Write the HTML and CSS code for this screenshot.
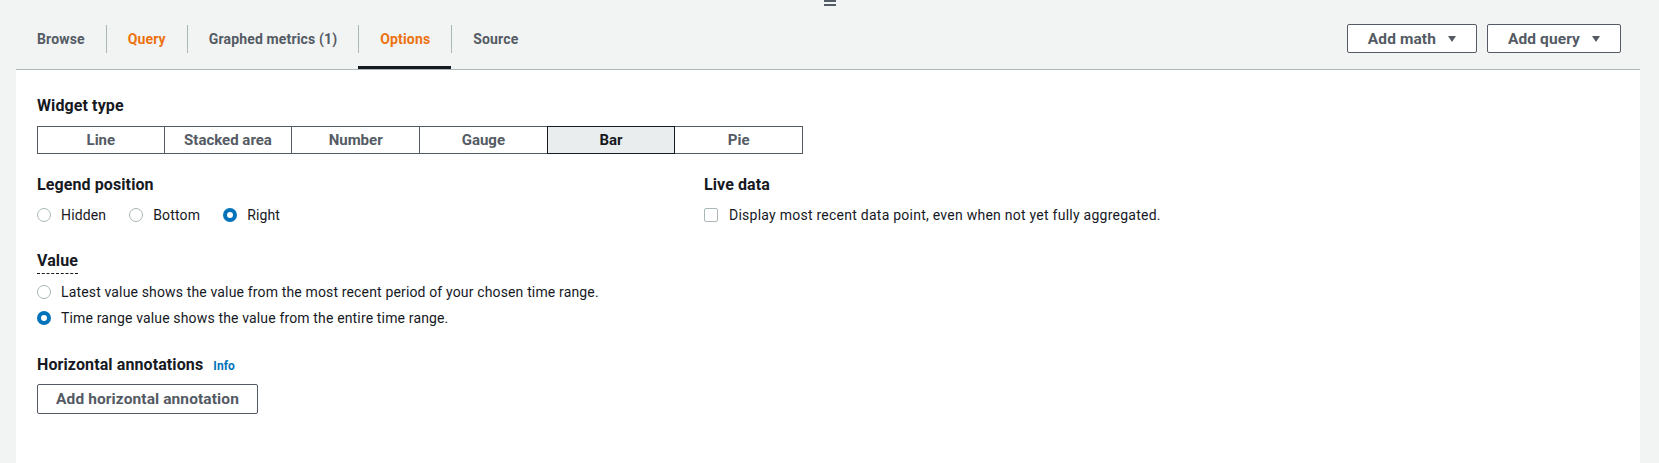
FILE: index.html
```html
<!DOCTYPE html>
<html lang="en">

<head>
    <meta charset="UTF-8">
    <title>Options</title>
    <link rel="stylesheet" href="styles.css">
</head>

<body>
    <div class="handle">
        <svg width="12" height="7" viewBox="0 0 12 7">
            <rect x="0" y="0" width="12" height="2" fill="#545b64"></rect>
            <rect x="0" y="4" width="12" height="2" fill="#545b64"></rect>
        </svg>
    </div>
    <div class="tabsBar">
        <ul class="tabs">
            <li class="tab"><span class="tabLabel">Browse</span></li>
            <li class="tab"><span class="tabLabel orange">Query</span></li>
            <li class="tab"><span class="tabLabel">Graphed metrics (1)</span></li>
            <li class="tab active"><span class="tabLabel orange">Options</span></li>
            <li class="tab"><span class="tabLabel">Source</span></li>
        </ul>
        <div class="actions">
            <button type="button" class="btn">Add math <span class="caret"></span></button>
            <button type="button" class="btn">Add query <span class="caret"></span></button>
        </div>
    </div>

    <div class="panel">
        <div class="field">
            <div class="label">Widget type</div>
            <div class="segments">
                <button type="button" class="seg">Line</button>
                <button type="button" class="seg">Stacked area</button>
                <button type="button" class="seg">Number</button>
                <button type="button" class="seg">Gauge</button>
                <button type="button" class="seg selected">Bar</button>
                <button type="button" class="seg">Pie</button>
            </div>
        </div>

        <div class="cols">
            <div class="field">
                <div class="label">Legend position</div>
                <div class="radioRow">
                    <label class="radio"><span class="dot"></span>Hidden</label>
                    <label class="radio"><span class="dot"></span>Bottom</label>
                    <label class="radio"><span class="dot on"></span>Right</label>
                </div>
            </div>
            <div class="field">
                <div class="label">Live data</div>
                <label class="check"><span class="box"></span>Display most recent data point, even when not yet fully aggregated.</label>
            </div>
        </div>

        <div class="field">
            <div class="label"><span class="dashed">Value</span></div>
            <div class="radioList">
                <label class="radio"><span class="dot"></span>Latest value shows the value from the most recent period of your chosen time range.</label>
                <label class="radio"><span class="dot on"></span>Time range value shows the value from the entire time range.</label>
            </div>
        </div>

        <div class="field annotations">
            <div class="label">Horizontal annotations <a class="info" href="#">Info</a></div>
            <button type="button" class="btn wide">Add horizontal annotation</button>
        </div>
    </div>
</body>

</html>
```

FILE: styles.css
```css
* {
    margin: 0;
    padding: 0;
    box-sizing: border-box;
}

body {
    background-color: #f2f3f3;
    font-family: Roboto, "Liberation Sans", Arial, sans-serif;
    font-size: 14px;
    line-height: 22px;
    letter-spacing: 0.15px;
    color: #16191f;
}

.handle {
    height: 24px;
    display: flex;
    justify-content: center;
    align-items: flex-start;
}

.handle svg {
    display: block;
}

.tabsBar {
    margin: 0 19px 0 16px;
    padding-right: 19px;
    display: flex;
    justify-content: space-between;
    align-items: flex-start;
    border-bottom: 1px solid #aab7b8;
}

.tabs {
    display: flex;
    list-style: none;
}

.tab {
    padding-top: 1px;
    padding-bottom: 13px;
    border-bottom: 3px solid transparent;
}

.tab.active {
    border-bottom-color: #16191f;
}

.tabLabel {
    display: block;
    padding: 0 21px;
    line-height: 28px;
    font-weight: bold;
    letter-spacing: 0.15px;
    color: #545b64;
}

.tab + .tab .tabLabel {
    border-left: 1px solid #aab7b8;
}

.tabLabel.orange {
    color: #ec7211;
}

.actions {
    display: flex;
    gap: 10px;
}

.btn {
    display: flex;
    align-items: center;
    justify-content: center;
    gap: 12px;
    height: 29px;
    padding: 0 20px;
    background-color: #fff;
    border: 1px solid #545b64;
    border-radius: 2px;
    font-family: inherit;
    font-size: 15.5px;
    font-weight: bold;
    letter-spacing: 0.1px;
    white-space: nowrap;
    color: #545b64;
}

.caret {
    width: 0;
    height: 0;
    border-left: 4.5px solid transparent;
    border-right: 4.5px solid transparent;
    border-top: 6px solid #545b64;
}

.panel {
    margin: 0 19px 0 16px;
    min-height: calc(100vh - 70px);
    background-color: #fff;
    padding: 25px 21px;
}

.field {
    margin-bottom: 20px;
}

.label {
    font-size: 16px;
    font-weight: bold;
    letter-spacing: 0.1px;
    margin-bottom: 9px;
}

.segments {
    display: grid;
    grid-template-columns: repeat(6, 1fr);
    width: 766px;
}

.seg {
    height: 28px;
    margin-left: -1px;
    background-color: #fff;
    border: 1px solid #545b64;
    font-family: inherit;
    font-size: 15px;
    font-weight: bold;
    color: #545b64;
}

.seg:first-child {
    margin-left: 0;
}

.seg.selected {
    position: relative;
    z-index: 1;
    background-color: #eaeded;
    border-color: #16191f;
    color: #16191f;
}

.cols {
    display: grid;
    grid-template-columns: 667px 1fr;
}

.cols .field {
    margin-bottom: 24px;
}

.cols .label {
    margin-bottom: 8px;
}

.radioRow {
    display: flex;
    gap: 23px;
}

.radio,
.check {
    display: flex;
    align-items: center;
    gap: 10px;
    line-height: 22px;
}

.check {
    letter-spacing: 0.25px;
}

.dot {
    width: 14px;
    height: 14px;
    border-radius: 50%;
    border: 1.5px solid #aab7b8;
    background-color: #fff;
}

.dot.on {
    border: 4px solid #0073bb;
}

.box {
    width: 14px;
    height: 14px;
    border-radius: 2px;
    border: 1.5px solid #aab7b8;
    margin-right: 1px;
}

.dashed {
    display: inline-block;
    line-height: 20px;
    padding-bottom: 2px;
    border-bottom: 1px dashed #16191f;
}

.radioList {
    display: flex;
    flex-direction: column;
    gap: 4px;
    margin-top: -2px;
}

.annotations {
    padding-top: 5px;
}

.annotations .label {
    margin-bottom: 7px;
}

.info {
    margin-left: 6px;
    font-size: 12px;
    color: #0073bb;
    text-decoration: none;
}

.btn.wide {
    width: 221px;
    height: 30px;
    padding: 0;
}
```
